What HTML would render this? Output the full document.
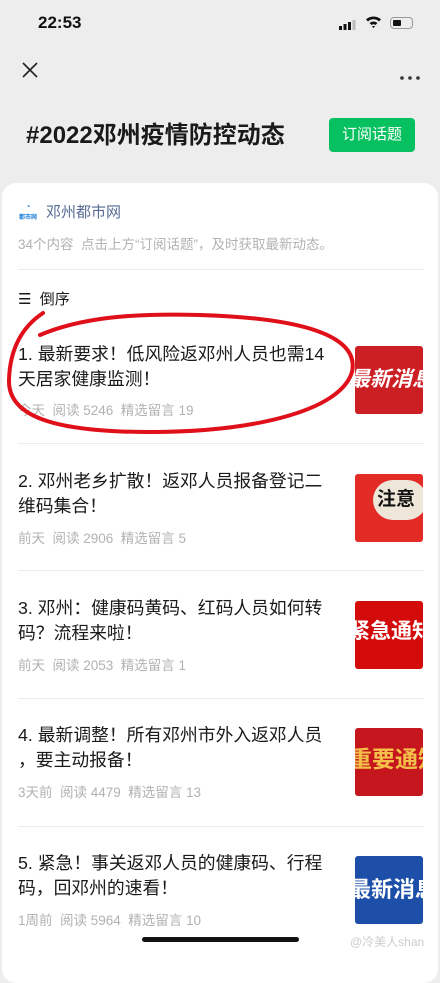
<!DOCTYPE html>
<html><head><meta charset="utf-8"><style>
*{margin:0;padding:0;box-sizing:border-box}
body{width:440px;height:952px;background:#ededed;font-family:"Liberation Sans","Noto Sans CJK SC",sans-serif;position:relative;overflow:hidden}
.a{position:absolute}
.card{left:2px;top:183px;width:436px;height:800px;background:#fff;border-radius:14px}
.t{left:18px;width:340px;font-size:17.8px;line-height:25px;color:#1a1a1a;white-space:nowrap}
.m{left:18px;font-size:13.5px;color:#b2b2b2}
.th{left:355px;width:68px;height:68px;border-radius:3px;overflow:hidden;color:#fff;font-weight:bold;font-size:21px;line-height:68px;white-space:nowrap;text-indent:-6px;font-style:italic}
.sep{left:18px;width:406px;height:1px;background:#ececec}
</style></head><body>
<div class="a" style="left:38px;top:13px;font-size:17px;font-weight:bold;color:#111">22:53</div>
<div class="a" style="left:339px;top:18px;width:17px;height:10px">
<svg width="17" height="11"><rect x="0" y="6" width="3" height="4" fill="#111"/><rect x="4.5" y="4" width="3" height="6" fill="#111"/><rect x="9" y="2" width="3" height="8" fill="#111"/><rect x="13.5" y="0" width="3" height="10" fill="#bbb"/></svg></div>
<div class="a" style="left:365px;top:15px"><svg width="17" height="13" viewBox="0 0 17 13"><path d="M1 4.5A11 11 0 0 1 16 4.5L14 6.5A8 8 0 0 0 3 6.5Z M4.5 8A6 6 0 0 1 12.5 8L10.5 10A3 3 0 0 0 6.5 10Z M7 11.5L8.5 13L10 11.5A2 2 0 0 0 7 11.5Z" fill="#111"/></svg></div>
<div class="a" style="left:390px;top:17px;width:23px;height:12px;border:1.5px solid #999;border-radius:4px"><div style="margin:1.5px;width:8px;height:6px;background:#111;border-radius:1px"></div></div>
<svg class="a" style="left:22px;top:62px" width="16" height="16"><path d="M1 1L15 15M15 1L1 15" stroke="#222" stroke-width="1.6"/></svg>
<div class="a" style="left:400px;top:68px"><svg width="20" height="5"><circle cx="2" cy="2" r="1.8" fill="#333"/><circle cx="10" cy="2" r="1.8" fill="#333"/><circle cx="18" cy="2" r="1.8" fill="#333"/></svg></div>
<div class="a" style="left:26px;top:115px;font-size:24px;font-weight:bold;color:#1a1a1a">#2022邓州疫情防控动态</div>
<div class="a" style="left:329px;top:118px;width:86px;height:34px;background:#07c160;border-radius:4px;color:#fff;font-size:15px;line-height:34px;text-align:center">订阅话题</div>
<div class="a card"></div>
<div class="a" style="left:18px;top:202px;width:20px;height:16px;color:#1a7fd6;font-size:8px;font-weight:bold;text-align:center;line-height:10px">◔<br><span style="font-size:6px">都市网</span></div>
<div class="a" style="left:46px;top:201px;font-size:15px;color:#576b95">邓州都市网</div>
<div class="a" style="left:18px;top:233px;font-size:13.5px;color:#b2b2b2">34个内容&nbsp; 点击上方“订阅话题”，及时获取最新动态。</div>
<div class="a sep" style="top:269px"></div>
<div class="a" style="left:18px;top:288px;font-size:15px;color:#1a1a1a">☰&nbsp; 倒序</div>

<div class="a t" style="top:342px">1. 最新要求！低风险返邓州人员也需14<br>天居家健康监测！</div>
<div class="a m" style="top:399px">今天&nbsp; 阅读 5246&nbsp; 精选留言 19</div>
<div class="a th" style="top:346px;background:#cc1f24">最新消息</div>
<div class="a sep" style="top:443px"></div>

<div class="a t" style="top:469px">2. 邓州老乡扩散！返邓人员报备登记二<br>维码集合！</div>
<div class="a m" style="top:527px">前天&nbsp; 阅读 2906&nbsp; 精选留言 5</div>
<div class="a th" style="top:474px;background:#e32a25"><div style="position:absolute;left:18px;top:6px;width:54px;height:40px;background:#eee6d8;border-radius:20px;color:#111;text-indent:0;line-height:40px;font-style:normal;font-size:19px;padding-left:4px">注意</div></div>
<div class="a sep" style="top:570px"></div>

<div class="a t" style="top:596px">3. 邓州：健康码黄码、红码人员如何转<br>码？流程来啦！</div>
<div class="a m" style="top:654px">前天&nbsp; 阅读 2053&nbsp; 精选留言 1</div>
<div class="a th" style="top:601px;background:#d40b0b;font-style:normal;line-height:62px">紧急通知</div>
<div class="a sep" style="top:698px"></div>

<div class="a t" style="top:723px">4. 最新调整！所有邓州市外入返邓人员<br>，要主动报备！</div>
<div class="a m" style="top:781px">3天前&nbsp; 阅读 4479&nbsp; 精选留言 13</div>
<div class="a th" style="top:728px;background:#c4161c;color:#f5c04a;font-style:normal;font-size:23px;line-height:62px">重要通知</div>
<div class="a sep" style="top:826px"></div>

<div class="a t" style="top:851px">5. 紧急！事关返邓人员的健康码、行程<br>码，回邓州的速看！</div>
<div class="a m" style="top:909px">1周前&nbsp; 阅读 5964&nbsp; 精选留言 10</div>
<div class="a th" style="top:856px;background:#1d4fa8;font-style:normal;font-size:22px">最新消息</div>

<div class="a" style="left:142px;top:937px;width:157px;height:5px;background:#111;border-radius:3px"></div>
<div class="a" style="left:350px;top:933px;font-size:12px;color:#ccc">@冷美人shan</div>

<svg class="a" style="left:0;top:0" width="440" height="480"><path d="M43 313C25 325 10 345 9 380C8 415 50 432 150 432C250 432 340 412 352 372C360 335 300 318 200 315C130 313 80 318 40 335" fill="none" stroke="#e0101a" stroke-width="4" stroke-linecap="round"/></svg>
</body></html>
